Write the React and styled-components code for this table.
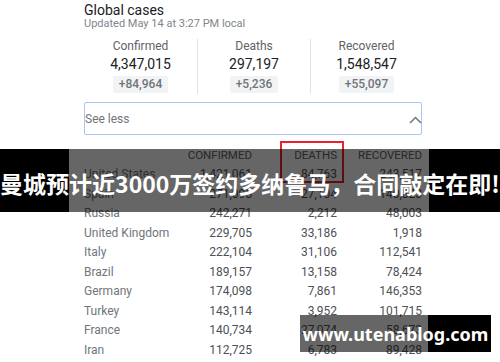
import styled, { createGlobalStyle } from "styled-components";

const GlobalStyle = createGlobalStyle`
  html, body {
    margin: 0;
    padding: 0;
    background: #fff;
  }
  body {
    font-family: Roboto, "Liberation Sans", Arial, sans-serif;
  }
`;

const stats = [
  { label: "Confirmed", value: "4,347,015", delta: "+84,964" },
  { label: "Deaths", value: "297,197", delta: "+5,236" },
  { label: "Recovered", value: "1,548,547", delta: "+55,097" },
];

const rows = [
  ["United States", "1,421,061", "84,763", "243,517"],
  ["Spain", "271,095", "27,104", "140,823"],
  ["Russia", "242,271", "2,212", "48,003"],
  ["United Kingdom", "229,705", "33,186", "1,918"],
  ["Italy", "222,104", "31,106", "112,541"],
  ["Brazil", "189,157", "13,158", "78,424"],
  ["Germany", "174,098", "7,861", "146,353"],
  ["Turkey", "143,114", "3,952", "101,715"],
  ["France", "140,734", "27,074", "58,673"],
  ["Iran", "112,725", "6,783", "89,428"],
];

const App = () => {
  return (
    <Page>
      <GlobalStyle />
      <Content>
        <Title>Global cases</Title>
        <Updated>Updated May 14 at 3:27 PM local</Updated>
        <Stats>
          {stats.map((s) => (
            <StatCol key={s.label}>
              <StatLabel>{s.label}</StatLabel>
              <StatValue>{s.value}</StatValue>
              <Delta>{s.delta}</Delta>
            </StatCol>
          ))}
        </Stats>
        <SeeLess>
          <span>See less</span>
          <svg width="13" height="8" viewBox="0 0 13 8">
            <path d="M1 7 L6.5 1.5 L12 7" fill="none" stroke="#777" strokeWidth="1.5" />
          </svg>
        </SeeLess>
        <Table>
          <HeadRow>
            <span />
            <HeadCell>CONFIRMED</HeadCell>
            <HeadCell $marked>DEATHS</HeadCell>
            <HeadCell>RECOVERED</HeadCell>
          </HeadRow>
          {rows.map((r) => (
            <Row key={r[0]}>
              <Country>{r[0]}</Country>
              <Num>{r[1]}</Num>
              <Num>{r[2]}</Num>
              <Num>{r[3]}</Num>
            </Row>
          ))}
        </Table>
      </Content>
      <Banner>曼城预计近3000万签约多纳鲁马，合同敲定在即!</Banner>
      <Watermark>www.utenablog.com</Watermark>
    </Page>
  );
};

const Page = styled.div`
  position: relative;
  width: 500px;
  height: 362px;
  overflow: hidden;
  background: #fff;
`;

const Content = styled.div`
  margin-left: 84px;
  width: 338px;
  padding-top: 2px;
`;

const Title = styled.div`
  font-size: 14px;
  line-height: 16px;
  color: #202124;
`;

const Updated = styled.div`
  font-size: 11px;
  line-height: 12px;
  color: #80868b;
`;

const Stats = styled.div`
  display: grid;
  grid-template-columns: 113px 113px 112px;
  margin-top: 9px;
`;

const StatCol = styled.div`
  display: flex;
  flex-direction: column;
  align-items: center;
  padding-bottom: 1px;
  & + & {
    border-left: 1px solid #e3e3e3;
  }
`;

const StatLabel = styled.div`
  font-size: 12px;
  line-height: 14px;
  color: #5f6368;
`;

const StatValue = styled.div`
  margin-top: 3px;
  font-size: 14px;
  line-height: 16px;
  color: #202124;
`;

const Delta = styled.div`
  margin-top: 4px;
  padding: 0 6px;
  height: 17px;
  line-height: 17px;
  font-size: 12px;
  font-weight: 500;
  color: #70757a;
  background: #f1f3f4;
  border-radius: 2px;
`;

const SeeLess = styled.div`
  display: flex;
  align-items: center;
  justify-content: space-between;
  box-sizing: border-box;
  height: 33px;
  margin-top: 8px;
  border: 1.5px solid #a9c6f7;
  border-radius: 2px;
  font-size: 12px;
  color: #70757a;
  svg {
    margin-right: -1px;
    margin-top: 2px;
  }
`;

const Table = styled.div`
  margin-top: 10px;
`;

const HeadRow = styled.div`
  display: grid;
  grid-template-columns: 1fr 70px 85px 85px;
  height: 19.5px;
  align-items: center;
`;

const HeadCell = styled.div`
  position: relative;
  text-align: right;
  font-size: 11.5px;
  color: #5f6368;
  ${(p) =>
    p.$marked &&
    `
    &::after {
      content: "";
      position: absolute;
      left: 28px;
      right: -7px;
      top: -7px;
      height: 38px;
      border: 2px solid #e8222a;
    }
  `}
`;

const Row = styled.div`
  display: grid;
  grid-template-columns: 1fr 70px 85px 85px;
  height: 19.5px;
  align-items: center;
  font-size: 12px;
`;

const Country = styled.div`
  color: #70757a;
`;

const Num = styled.div`
  text-align: right;
  color: #4d5156;
`;

const Banner = styled.div`
  position: absolute;
  left: 0;
  right: 0;
  top: 149px;
  height: 63px;
  display: flex;
  align-items: center;
  justify-content: center;
  white-space: nowrap;
  background: linear-gradient(
    to right,
    #000 69px,
    rgba(0, 0, 0, 0.6) 69px,
    rgba(0, 0, 0, 0.6) 429px,
    #000 429px
  );
  color: #fff;
  font-family: "Noto Sans CJK SC", "Noto Sans", sans-serif;
  font-weight: 700;
  font-size: 23px;
  padding-top: 4px;
  box-sizing: border-box;
`;

const Watermark = styled.div`
  position: absolute;
  left: 300px;
  top: 315px;
  width: 191px;
  height: 37px;
  display: flex;
  align-items: center;
  justify-content: center;
  background: linear-gradient(
    to right,
    rgba(0, 0, 0, 0.6) 128px,
    #000 128px
  );
  color: #fff;
  font-family: "Noto Sans", "DejaVu Sans", sans-serif;
  font-weight: 700;
  font-size: 18px;
`;

export default App;
